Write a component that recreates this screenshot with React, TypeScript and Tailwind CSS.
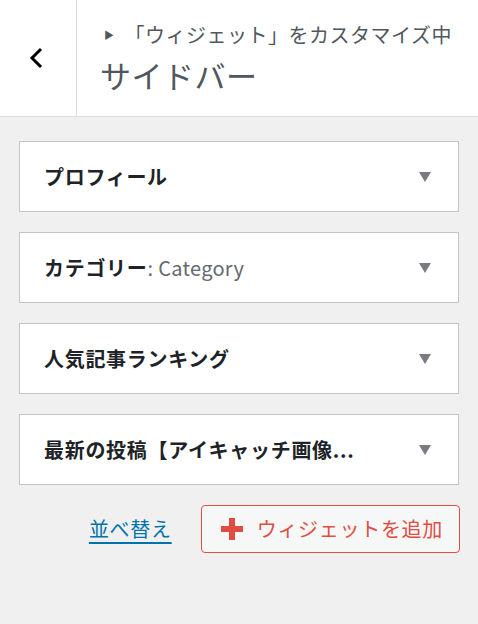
import React from 'react';

const FONT = { fontFamily: '"Noto Sans CJK JP", "Noto Sans", sans-serif' };

const widgets: { title: string; sub?: string }[] = [
  { title: 'プロフィール' },
  { title: 'カテゴリー', sub: ': Category' },
  { title: '人気記事ランキング' },
  { title: '最新の投稿【アイキャッチ画像...' },
];

export default function App() {
  return (
    <div className="w-[478px] h-[624px] bg-[#f0f0f1] overflow-hidden" style={FONT}>
      {/* Header */}
      <div className="flex h-[117px] bg-white border-b border-[#dcdcde]">
        <button className="w-[77px] flex items-center justify-center border-r border-[#dcdcde] shrink-0">
          <svg width="16" height="22" viewBox="0 0 16 22" className="mt-[-1px] ml-[-3px]">
            <path d="M12 2 L3 11 L12 20" fill="none" stroke="#000" strokeWidth="3" />
          </svg>
        </button>
        <div className="pl-[23px] pt-[20px]">
          <div className="flex items-center text-[20px] leading-[30px] text-[#50575e] tracking-[0.5px]">
            <span className="text-[10px] mr-[10px] ml-[4px] text-[#50575e]">▶</span>
            「ウィジェット」をカスタマイズ中
          </div>
          <div className="text-[31px] leading-[44px] text-[#50575e] mt-[3px] tracking-[0.5px]">サイドバー</div>
        </div>
      </div>

      {/* Widget list */}
      <div className="px-[19px] pt-[24px] flex flex-col gap-[20px]">
        {widgets.map((w) => (
          <div
            key={w.title}
            className="h-[71px] bg-white border border-[#c3c4c7] flex items-center justify-between pl-[24px] pr-[27px]"
          >
            <span className="text-[20px] font-bold text-[#1d2327] tracking-[0.7px]">
              {w.title}
              {w.sub && <span className="font-normal text-[20px] text-[#646970] tracking-[0.3px]">{w.sub}</span>}
            </span>
            <svg width="12" height="10" viewBox="0 0 12 10">
              <path d="M0 0 L12 0 L6 10 Z" fill="#787c82" />
            </svg>
          </div>
        ))}
      </div>

      {/* Actions */}
      <div className="flex items-center justify-end gap-[29px] px-[18px] mt-[20px]">
        <a href="#" className="text-[20px] text-[#0073aa] underline decoration-2 underline-offset-[5px] tracking-[0.7px]">
          並べ替え
        </a>
        <button className="h-[48px] flex items-center gap-[14px] pl-[19px] pr-[16px] rounded-[4px] border border-[#e14d43] bg-[#f6f7f7] text-[20px] text-[#e14d43] tracking-[0.7px]">
          <svg width="22" height="22" viewBox="0 0 22 22">
            <path d="M8 0 H14 V8 H22 V14 H14 V22 H8 V14 H0 V8 H8 Z" fill="#e14d43" />
          </svg>
          ウィジェットを追加
        </button>
      </div>
    </div>
  );
}
